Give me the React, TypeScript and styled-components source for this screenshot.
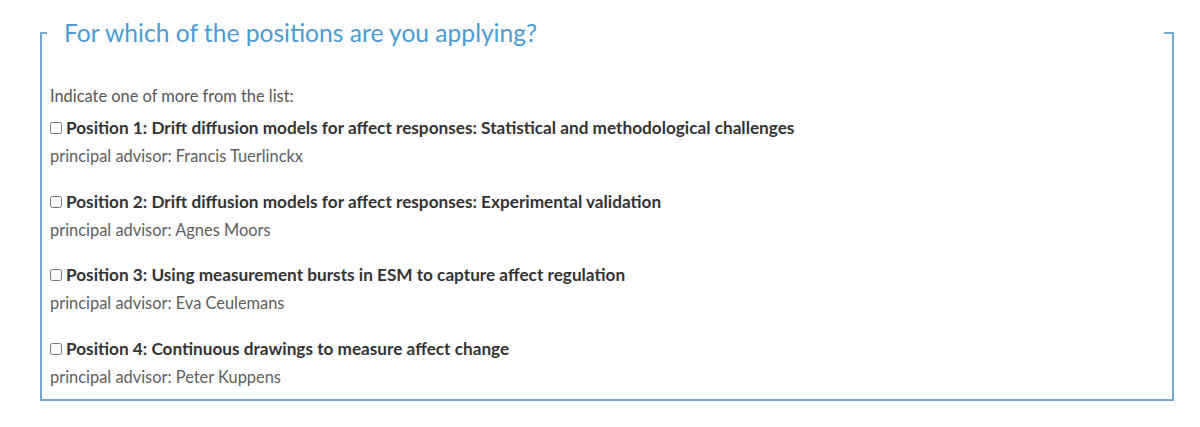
import React from "react";
import styled, {createGlobalStyle} from "styled-components";

const positions = [
    {
        id: 1,
        title: "Position 1: Drift diffusion models for affect responses: Statistical and methodological challenges",
        advisor: "Francis Tuerlinckx"
    },
    {
        id: 2,
        title: "Position 2: Drift diffusion models for affect responses: Experimental validation",
        advisor: "Agnes Moors"
    },
    {
        id: 3,
        title: "Position 3: Using measurement bursts in ESM to capture affect regulation",
        advisor: "Eva Ceulemans"
    },
    {
        id: 4,
        title: "Position 4: Continuous drawings to measure affect change",
        advisor: "Peter Kuppens"
    },
];

const App = () => {
    return (
        <>
            <GlobalStyle/>
            <Page>
                <Fieldset>
                    <Legend>For which of the positions are you applying?</Legend>
                    <Intro>Indicate one of more from the list:</Intro>
                    {positions.map(p => (
                        <Option key={p.id}>
                            <Label>
                                <Checkbox type="checkbox" name={`position-${p.id}`}/>
                                {p.title}
                            </Label>
                            <Advisor>principal advisor: {p.advisor}</Advisor>
                        </Option>
                    ))}
                </Fieldset>
            </Page>
        </>
    );
};

export default App;

const GlobalStyle = createGlobalStyle`
  body {
    margin: 0;
    background: #fff;
    font-family: Lato, "Open Sans", sans-serif;
  }
`;

const Page = styled.div`
  padding: 17px 26px 0 40px;
`;

const Fieldset = styled.fieldset`
  margin: 0;
  padding: 0 8px 8px 8px;
  border: 2px solid #76a7cf;
  min-width: 0;
`;

const Legend = styled.legend`
  box-sizing: border-box;
  width: calc(100% + 3px);
  margin-left: -3px;
  padding: 0 17px;
  font-size: 24.6px;
  line-height: 32px;
  font-weight: 400;
  color: #4b9bd4;
`;

const Intro = styled.p`
  margin: 33px 0 4px;
  font-size: 16.4px;
  line-height: 28px;
  color: #555;
`;

const Option = styled.div`
  & + & {
    margin-top: 17.5px;
  }
`;

const Label = styled.label`
  display: flex;
  align-items: center;
  font-size: 17.2px;
  line-height: 28px;
  font-weight: 700;
  color: #333;
`;

const Checkbox = styled.input`
  width: 12px;
  height: 12px;
  margin: 0 4px 0 0;
`;

const Advisor = styled.div`
  font-size: 16.4px;
  line-height: 28px;
  color: #5e5e5e;
`;
